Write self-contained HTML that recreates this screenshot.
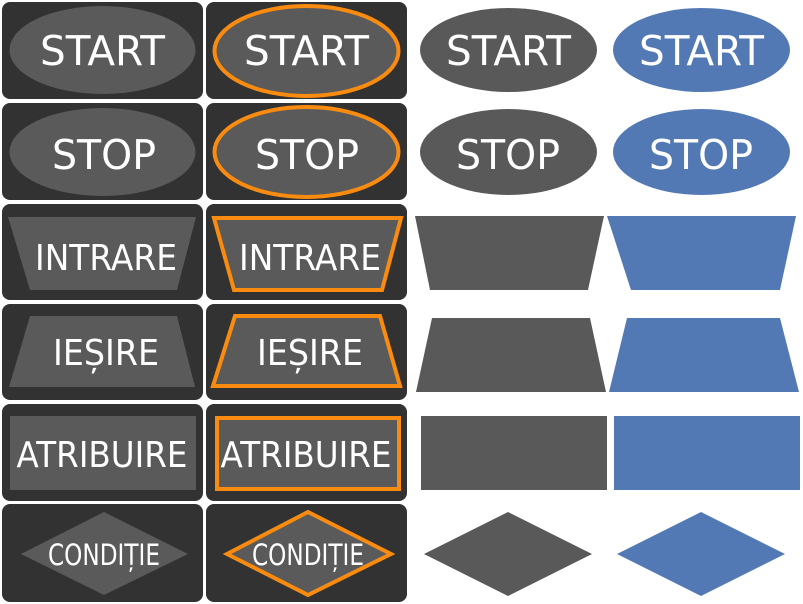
<!DOCTYPE html>
<html><head><meta charset="utf-8"><style>
html,body{margin:0;padding:0;background:#fff;width:803px;height:604px;overflow:hidden}
svg{display:block}
text{font-family:"DejaVu Sans","Liberation Sans",sans-serif;fill:#fff;text-anchor:middle}
</style></head><body>
<svg width="803" height="604" viewBox="0 0 803 604">
<g fill="#323232">
<rect x="2" y="2" width="201" height="97" rx="8"/><rect x="206" y="2" width="201" height="97" rx="8"/>
<rect x="2" y="103" width="201" height="97" rx="8"/><rect x="206" y="103" width="201" height="97" rx="8"/>
<rect x="2" y="204" width="201" height="96" rx="8"/><rect x="206" y="204" width="201" height="96" rx="8"/>
<rect x="2" y="304" width="201" height="96" rx="8"/><rect x="206" y="304" width="201" height="96" rx="8"/>
<rect x="2" y="404" width="201" height="97" rx="8"/><rect x="206" y="404" width="201" height="97" rx="8"/>
<rect x="2" y="504" width="201" height="98" rx="8"/><rect x="206" y="504" width="201" height="98" rx="8"/>
</g>
<g fill="#5a5a5a">
<ellipse cx="102.5" cy="50" rx="93" ry="44"/>
<ellipse cx="102.5" cy="152" rx="93" ry="44"/>
<polygon points="8,217 196,217 177,290 30,290"/>
<polygon points="30,316 177,316 195,387 9,387"/>
<rect x="10" y="416" width="186" height="74"/>
<polygon points="21,554 104,512 188,554 104,595"/>
</g>
<g fill="#5a5a5a" stroke="#f98c10" stroke-width="4">
<ellipse cx="306.5" cy="51" rx="92" ry="45"/>
<ellipse cx="306.5" cy="152" rx="92" ry="45"/>
<polygon points="214,218 401,218 382,290 234,290"/>
<polygon points="235,316 380,316 400,386 213,386"/>
<rect x="217" y="418" width="182" height="71"/>
<polygon points="227,554 308,512 391,554 308,595"/>
</g>
<g fill="#595959">
<ellipse cx="508.5" cy="50" rx="88.5" ry="42"/>
<ellipse cx="508.5" cy="152" rx="88.5" ry="43"/>
<polygon points="415,216 604,216 588,290 430,290"/>
<polygon points="432,318 590,318 606,392 416,392"/>
<rect x="421" y="416" width="186" height="74"/>
<polygon points="424,554 508,512 592,554 508,596"/>
</g>
<g fill="#5379b5">
<ellipse cx="701.5" cy="50" rx="88.5" ry="42"/>
<ellipse cx="701.5" cy="152" rx="88.5" ry="43"/>
<polygon points="607,216 796,216 780,290 631,290"/>
<polygon points="627,318 780,318 799,392 609,392"/>
<rect x="614" y="416" width="186" height="74"/>
<polygon points="617,554 701,512 785,554 701,596"/>
</g>
<g font-size="41">
<text x="102.5" y="65" textLength="125" lengthAdjust="spacingAndGlyphs">START</text>
<text x="306.5" y="65" textLength="125" lengthAdjust="spacingAndGlyphs">START</text>
<text x="508.5" y="65" textLength="125" lengthAdjust="spacingAndGlyphs">START</text>
<text x="701.5" y="65" textLength="125" lengthAdjust="spacingAndGlyphs">START</text>
<text x="104" y="169" textLength="104" lengthAdjust="spacingAndGlyphs">STOP</text>
<text x="307" y="169" textLength="104" lengthAdjust="spacingAndGlyphs">STOP</text>
<text x="508" y="169" textLength="104" lengthAdjust="spacingAndGlyphs">STOP</text>
<text x="701" y="169" textLength="104" lengthAdjust="spacingAndGlyphs">STOP</text>
</g>
<g font-size="36">
<text x="106" y="270" textLength="142" lengthAdjust="spacingAndGlyphs">INTRARE</text>
<text x="310" y="270" textLength="142" lengthAdjust="spacingAndGlyphs">INTRARE</text>
<text x="106" y="365" textLength="106" lengthAdjust="spacingAndGlyphs">IEȘIRE</text>
<text x="310" y="365" textLength="106" lengthAdjust="spacingAndGlyphs">IEȘIRE</text>
<text x="102" y="467" textLength="171" lengthAdjust="spacingAndGlyphs">ATRIBUIRE</text>
<text x="306" y="467" textLength="171" lengthAdjust="spacingAndGlyphs">ATRIBUIRE</text>
</g>
<g font-size="29">
<text x="104" y="565" textLength="112" lengthAdjust="spacingAndGlyphs">CONDIȚIE</text>
<text x="308" y="565" textLength="112" lengthAdjust="spacingAndGlyphs">CONDIȚIE</text>
</g>
</svg>
</body></html>
